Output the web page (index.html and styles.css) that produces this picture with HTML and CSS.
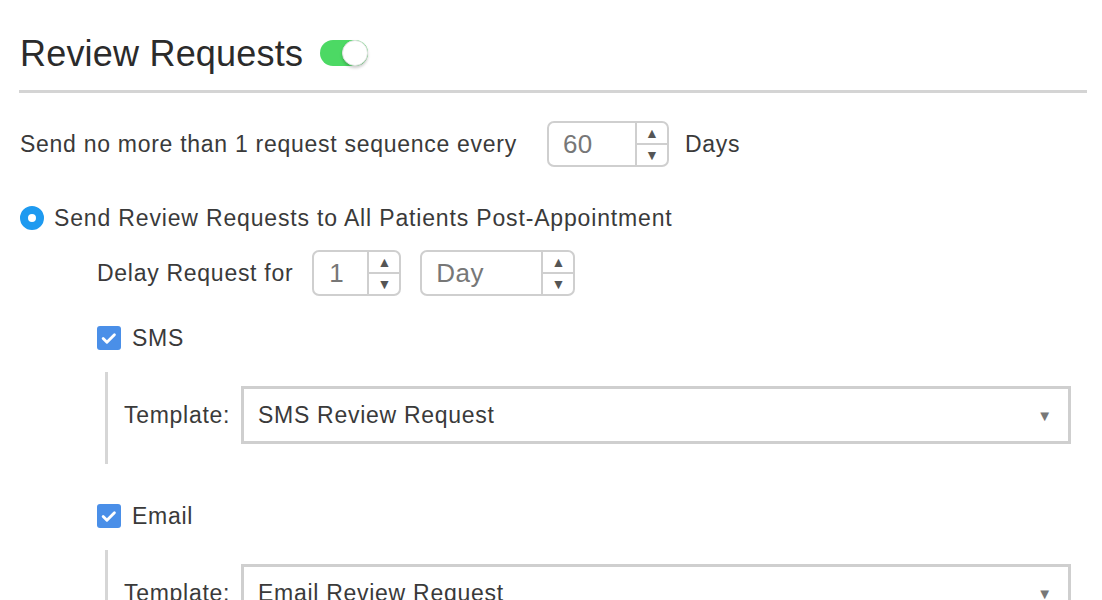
FILE: index.html
```html
<!DOCTYPE html>
<html lang="en">
  <head>
    <meta charset="UTF-8">
    <title>Review Requests</title>
    <link rel="stylesheet" href="styles.css">
  </head>
  <body>
    <div class="settings">
      <div class="head">
        <h2>Review Requests</h2>
        <span class="toggle on"><span class="knob"></span></span>
      </div>

      <div class="row every">
        <span>Send no more than 1 request sequence every</span>
        <div class="spin days">
          <span class="val">60</span>
          <span class="arrows"><i>&#9650;</i><i>&#9660;</i></span>
        </div>
        <span class="unit">Days</span>
      </div>

      <div class="row radio-row">
        <span class="radio"></span>
        <span>Send Review Requests to All Patients Post-Appointment</span>
      </div>

      <div class="sub">
        <div class="row delay">
          <span>Delay Request for</span>
          <div class="spin small">
            <span class="val">1</span>
            <span class="arrows"><i>&#9650;</i><i>&#9660;</i></span>
          </div>
          <div class="spin period">
            <span class="val">Day</span>
            <span class="arrows"><i>&#9650;</i><i>&#9660;</i></span>
          </div>
        </div>

        <div class="row check-row">
          <span class="check"><svg viewBox="0 0 24 24" width="20" height="20"><path d="M5 12.5l4.5 4.5L18.5 8" fill="none" stroke="#fff" stroke-width="3.4" stroke-linecap="round" stroke-linejoin="round"/></svg></span>
          <span>SMS</span>
        </div>
        <div class="channel">
          <span class="lbl">Template:</span>
          <div class="select">SMS Review Request<span class="caret">&#9660;</span></div>
        </div>

        <div class="row check-row second">
          <span class="check"><svg viewBox="0 0 24 24" width="20" height="20"><path d="M5 12.5l4.5 4.5L18.5 8" fill="none" stroke="#fff" stroke-width="3.4" stroke-linecap="round" stroke-linejoin="round"/></svg></span>
          <span>Email</span>
        </div>
        <div class="channel">
          <span class="lbl">Template:</span>
          <div class="select">Email Review Request<span class="caret">&#9660;</span></div>
        </div>
      </div>
    </div>
  </body>
</html>
```

FILE: styles.css
```css
body {
    margin: 0;
    background: #fff;
    color: #3a3a3a;
    font-family: "Liberation Sans", Arial, sans-serif;
    font-size: 23px;
    letter-spacing: 0.72px;
    overflow: hidden;
}
.settings {
    margin: 0 15px 0 19px;
}
.head {
    display: flex;
    align-items: center;
    height: 76px;
    padding-top: 14px;
    border-bottom: 3px solid #d4d4d4;
}
.head h2 {
    margin: 4px 0 0 1px;
    font-size: 36px;
    font-weight: normal;
    letter-spacing: 0.2px;
    color: #2b2b2b;
}
.toggle {
    position: relative;
    display: inline-block;
    width: 48px;
    height: 26px;
    margin: 2px 0 0 17px;
    border-radius: 13px;
    background: #4cd964;
}
.toggle .knob {
    position: absolute;
    top: 0;
    right: 0;
    width: 24px;
    height: 24px;
    border-radius: 50%;
    background: #fff;
    border: 1px solid #e3e3e3;
    box-shadow: 0 2px 3px rgba(0, 0, 0, 0.2);
}
.row {
    display: flex;
    align-items: center;
}
.every {
    height: 46px;
    margin-top: 28px;
    padding-left: 1px;
}
.spin {
    display: flex;
    height: 42px;
    border: 2px solid #cfcfcf;
    border-radius: 7px;
}
.spin .val {
    flex: 1;
    display: flex;
    align-items: center;
    color: #777;
    font-size: 26px;
    letter-spacing: 0.4px;
}
.spin .arrows {
    display: flex;
    flex-direction: column;
    width: 30px;
    border-left: 2px solid #cfcfcf;
}
.spin .arrows i {
    flex: 1;
    display: flex;
    align-items: center;
    justify-content: center;
    font-style: normal;
    font-size: 14px;
    letter-spacing: 0;
    color: #555;
}
.spin .arrows i + i {
    border-top: 2px solid #cfcfcf;
}
.days {
    width: 118px;
    margin-left: 30px;
}
.days .val {
    padding-left: 14px;
}
.unit {
    margin-left: 16px;
}
.radio-row {
    height: 30px;
    margin-top: 36px;
    padding-left: 1px;
}
.radio-row span + span {
    letter-spacing: 0.84px;
}
.radio {
    width: 8px;
    height: 8px;
    margin-right: 10px;
    border: 8px solid #1e9af0;
    border-radius: 50%;
    background: #fff;
}
.sub {
    padding-left: 78px;
}
.delay {
    height: 46px;
    margin-top: 17px;
}
.small {
    width: 85px;
    margin-left: 19px;
}
.small .val {
    padding-left: 15px;
}
.period {
    width: 151px;
    margin-left: 19px;
}
.period .val {
    padding-left: 14px;
}
.check-row {
    height: 24px;
    margin-top: 30px;
}
.check-row.second {
    margin-top: 40px;
}
.check {
    display: flex;
    align-items: center;
    justify-content: center;
    width: 24px;
    height: 24px;
    margin-right: 11px;
    border-radius: 3px;
    background: #4a8fe8;
}
.channel {
    display: flex;
    align-items: center;
    margin: 22px 16px 0 8px;
    padding: 14px 0 20px 16px;
    border-left: 3px solid #d6d6d6;
}
.lbl {
    width: 117px;
}
.select {
    flex: 1;
    display: flex;
    align-items: center;
    height: 52px;
    padding: 0 16px 0 14px;
    border: 3px solid #cfcfcf;
    color: #3a3a3a;
}
.caret {
    margin-left: auto;
    font-size: 15px;
    letter-spacing: 0;
    color: #777;
}
```
